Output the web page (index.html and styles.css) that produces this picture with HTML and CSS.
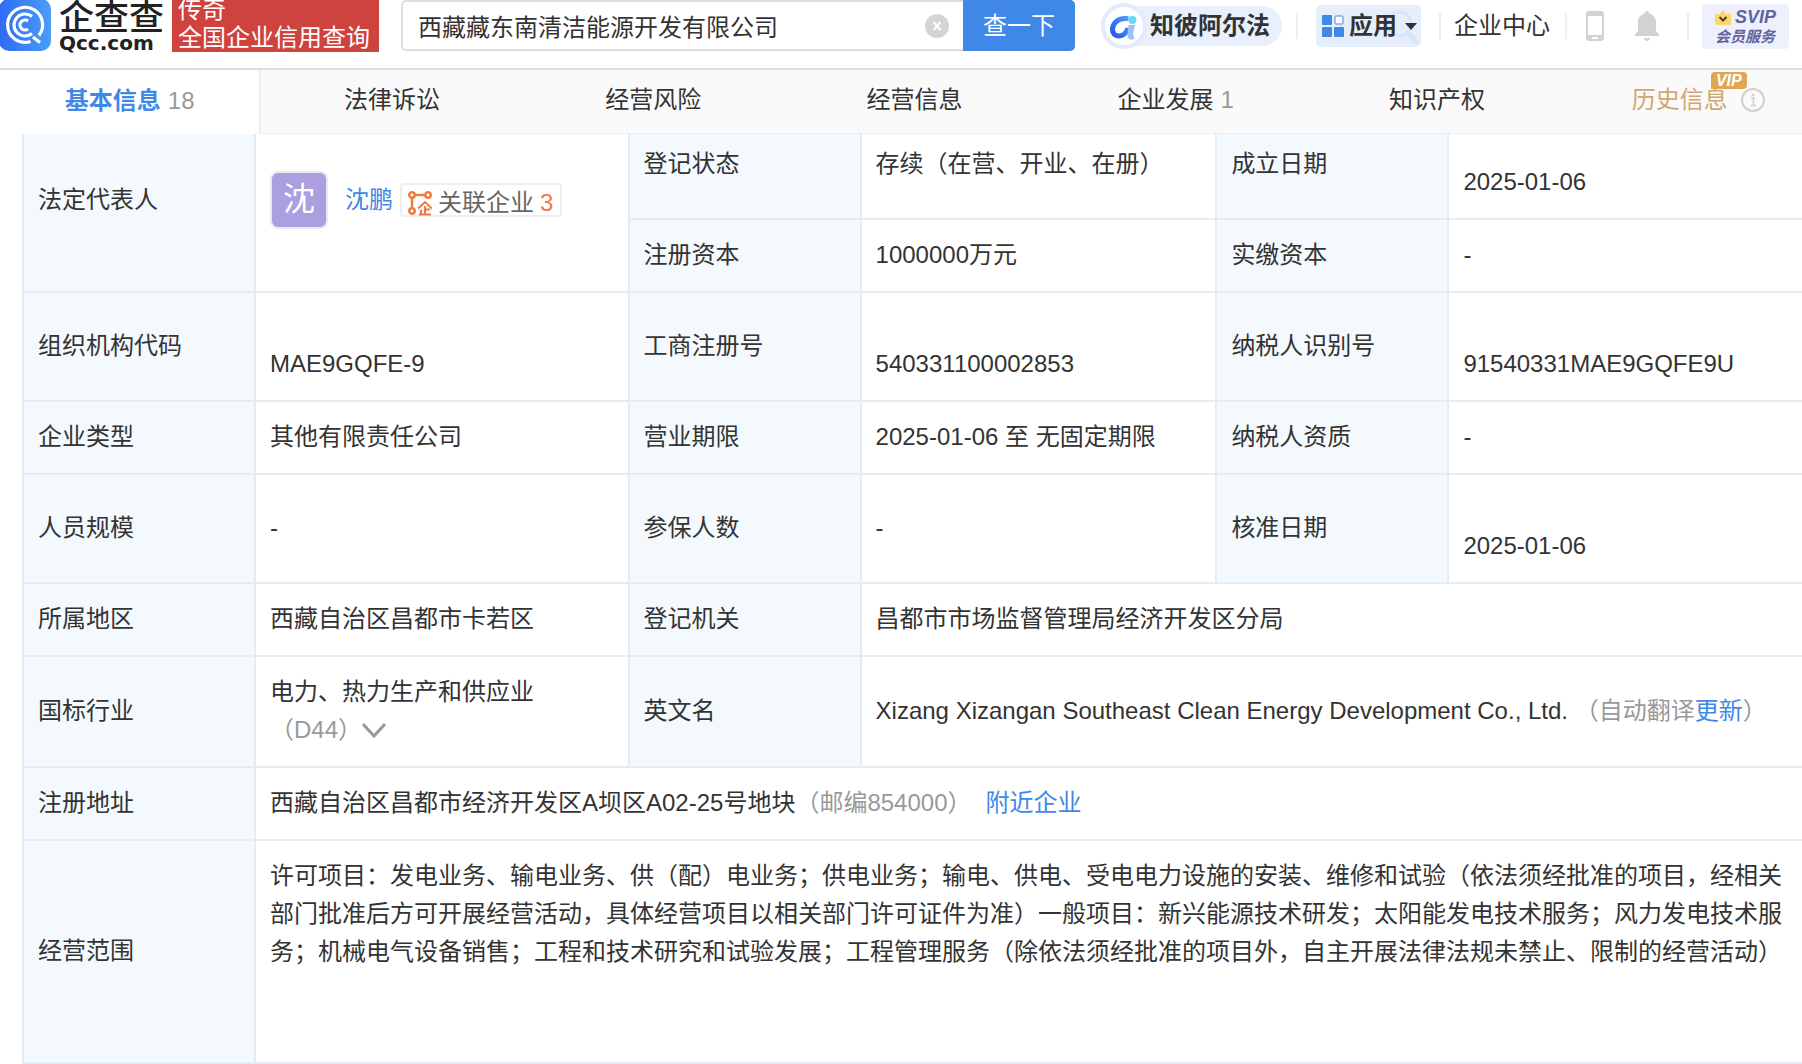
FILE: index.html
```html
<!DOCTYPE html>
<html lang="zh-CN">
<head>
    <meta charset="UTF-8">
    <meta name="viewport" content="width=device-width, initial-scale=1.0">
    <title>西藏藏东南清洁能源开发有限公司 - 企查查</title>
    <link rel="stylesheet" href="styles.css">
</head>
<body>
    <header class="header">
        <a class="logo" href="#">
            <svg class="logo-mark" viewBox="0 0 52 52" aria-hidden="true">
                <defs>
                    <linearGradient id="logo-bg" x1="0" y1="0" x2="1" y2="0">
                        <stop offset="0" stop-color="#2f6bf6"/>
                        <stop offset="1" stop-color="#4a9df7"/>
                    </linearGradient>
                </defs>
                <rect x="-1" y="-1" width="52" height="52" rx="10" fill="url(#logo-bg)"/>
                <g fill="none" stroke="#fff" stroke-width="3.200">
                    <path d="M39 35.500 A17.500 17.500 0 1 0 30.500 41.500"/>
                    <path d="M33 37 L40 42.500"/>
                    <path d="M32 16.500 A11 11 0 1 0 32 33.500"/>
                    <path d="M28 21 A5 5 0 1 0 28 29"/>
                </g>
            </svg>
            <span class="logo-text">
                <span class="logo-cn">企查查</span>
                <span class="logo-en">Qcc.com</span>
            </span>
        </a>
        <div class="slogan">传奇<br>全国企业信用查询</div>

        <form class="search">
            <input class="search-input" type="text" aria-label="企业名称" value="西藏藏东南清洁能源开发有限公司">
            <button class="search-clear" type="reset" aria-label="清空">
                <svg viewBox="0 0 24 24"><circle cx="12" cy="12" r="12" fill="#d4d4d4"/><path d="M8.500 8 L15.500 16 M15.500 8 L8.500 16" stroke="#fff" stroke-width="2"/></svg>
            </button>
            <button class="search-btn" type="button">查一下</button>
        </form>

        <nav class="tools">
            <a class="alpha" href="#">
                <svg class="alpha-icon" viewBox="0 0 46 46" aria-hidden="true">
                    <defs>
                        <linearGradient id="alpha-c" x1="1" y1="0" x2="0" y2="1">
                            <stop offset="0" stop-color="#4c9bf5"/>
                            <stop offset="1" stop-color="#2358ee"/>
                        </linearGradient>
                    </defs>
                    <circle cx="23" cy="23" r="21" fill="#fff" stroke="#e3ebfc" stroke-width="4"/>
                    <path d="M27.500 15.500 H24 C16 15.500 11.500 21 11.500 26.500 C11.500 30.500 14 33 18 33 C23 33 25.500 29.500 27 25" fill="none" stroke="url(#alpha-c)" stroke-width="5"/>
                    <path d="M27.500 22 H34 L32 31 L33.500 36 C29 38 26 35.500 26.500 31 Z" fill="#9cc0f8"/>
                    <circle cx="31.500" cy="17" r="4" fill="#62dcf8"/>
                </svg>
                <span>知彼阿尔法</span>
            </a>
            <span class="line"></span>
            <button class="apps" type="button">
                <svg class="apps-lens" viewBox="0 0 34 34" aria-hidden="true"><circle cx="14" cy="14" r="12" fill="none" stroke="#d9e6fa" stroke-width="3"/><path d="M23 23 L31 31" stroke="#d9e6fa" stroke-width="5" stroke-linecap="round"/></svg>
                <svg class="apps-icon" viewBox="0 0 22 22" aria-hidden="true">
                    <rect width="10" height="10" rx="1" fill="#3f88e8"/>
                    <rect x="13" y="1" width="8" height="8" rx="1" fill="#fff" stroke="#3f88e8"/>
                    <rect y="12" width="10" height="10" rx="1" fill="#3f88e8"/>
                    <rect x="12" y="12" width="10" height="10" rx="1" fill="#3f88e8"/>
                </svg>
                <span>应用</span>
                <svg class="apps-caret" viewBox="0 0 12 7" aria-hidden="true"><path d="M0 0H12L6 7Z" fill="#333"/></svg>
            </button>
            <span class="line"></span>
            <a class="center-link" href="#">企业中心</a>
            <span class="line"></span>
            <a class="tool-icon" href="#" aria-label="手机版">
                <svg class="phone" viewBox="0 0 18 30"><path fill-rule="evenodd" fill="#d2d2d2" d="M3 0H15A3 3 0 0 1 18 3V27A3 3 0 0 1 15 30H3A3 3 0 0 1 0 27V3A3 3 0 0 1 3 0ZM2 5V24H16V5ZM6 26V28H12V26Z"/></svg>
            </a>
            <a class="tool-icon" href="#" aria-label="消息">
                <svg class="bell" viewBox="0 0 24 30"><path fill="#d2d2d2" d="M12 0C13.300 0 14 .8 14 2.200C18.500 3.200 21 7 21 11V20L24 23.500V25H0V23.500L3 20V11C3 7 5.500 3.200 10 2.200C10 .8 10.700 0 12 0ZM9 27H15C15 28.800 13.500 30 12 30S9 28.800 9 27Z"/></svg>
            </a>
            <span class="line"></span>
            <a class="svip" href="#">
                <span class="svip-top">
                    <svg class="crown" viewBox="0 0 16 15" aria-hidden="true"><path d="M0 3L4 4.500L8 0L12 4.500L16 3V13Q16 15 14 15H2Q0 15 0 13Z" fill="#fbd56d"/><path d="M4.500 7L8 10.500L11.500 7" fill="none" stroke="#4a4030" stroke-width="2"/></svg>
                    SVIP
                </span>
                <span class="svip-sub">会员服务</span>
            </a>
        </nav>
    </header>

    <nav class="tabs">
        <a class="tab active" href="#">基本信息<span class="count">18</span></a>
        <a class="tab" href="#">法律诉讼</a>
        <a class="tab" href="#">经营风险</a>
        <a class="tab" href="#">经营信息</a>
        <a class="tab" href="#">企业发展<span class="count">1</span></a>
        <a class="tab" href="#">知识产权</a>
        <a class="tab history" href="#">
            <span class="history-text">历史信息<span class="vip">VIP</span></span>
            <svg class="info" viewBox="0 0 24 24" aria-hidden="true"><circle cx="12" cy="12" r="11" fill="none" stroke="#d0d0d0" stroke-width="2"/><path d="M10 10H12.500V17M10 17.500H15" fill="none" stroke="#d0d0d0" stroke-width="1.500"/><circle cx="12" cy="7" r="1.300" fill="#d0d0d0"/></svg>
        </a>
    </nav>

    <main class="content">
        <table class="info-table">
            <colgroup>
                <col class="col-label"><col class="col-first">
                <col class="col-label"><col class="col-second">
                <col class="col-label"><col>
            </colgroup>
            <tr class="tall">
                <th rowspan="2">法定代表人</th>
                <td rowspan="2">
                    <div class="person">
                        <span class="avatar">沈</span>
                        <a class="person-name" href="#">沈鹏</a>
                        <a class="related" href="#">
                            <svg class="related-icon" viewBox="0 0 24 26" aria-hidden="true">
                                <g fill="none" stroke="#f07a41" stroke-width="2">
                                    <g stroke-width="2.500"><circle cx="4" cy="5" r="2.700"/><circle cx="20" cy="5" r="2.700"/><circle cx="4" cy="21" r="2.700"/><path d="M7 5H17M4 8V18"/></g>
                                    <path d="M10 18.500L17 12L24 18.500M17 16V24M17 19.500H22M13 19.500V24M11 24.500H23"/>
                                </g>
                            </svg>
                            <span>关联企业</span>
                            <span class="related-num">3</span>
                        </a>
                    </div>
                </td>
                <th>登记状态</th>
                <td>存续（在营、开业、在册）</td>
                <th>成立日期</th>
                <td><span class="copy-value">2025-01-06</span></td>
            </tr>
            <tr>
                <th>注册资本</th>
                <td>1000000万元</td>
                <th>实缴资本</th>
                <td>-</td>
            </tr>
            <tr class="tall">
                <th>组织机构代码</th>
                <td><span class="copy-value">MAE9GQFE-9</span></td>
                <th>工商注册号</th>
                <td><span class="copy-value">540331100002853</span></td>
                <th>纳税人识别号</th>
                <td><span class="copy-value">91540331MAE9GQFE9U</span></td>
            </tr>
            <tr>
                <th>企业类型</th>
                <td>其他有限责任公司</td>
                <th>营业期限</th>
                <td>2025-01-06 至 无固定期限</td>
                <th>纳税人资质</th>
                <td>-</td>
            </tr>
            <tr class="tall">
                <th>人员规模</th>
                <td>-</td>
                <th>参保人数</th>
                <td>-</td>
                <th>核准日期</th>
                <td><span class="copy-value">2025-01-06</span></td>
            </tr>
            <tr>
                <th>所属地区</th>
                <td>西藏自治区昌都市卡若区</td>
                <th>登记机关</th>
                <td colspan="3">昌都市市场监督管理局经济开发区分局</td>
            </tr>
            <tr class="double">
                <th>国标行业</th>
                <td>
                    电力、热力生产和供应业<br>
                    <span class="muted">（D44）</span><svg class="chevron" viewBox="0 0 24 15" aria-hidden="true"><path d="M1 1L12 13L23 1" fill="none" stroke="#999" stroke-width="3"/></svg>
                </td>
                <th>英文名</th>
                <td colspan="3">Xizang Xizangan Southeast Clean Energy Development Co., Ltd. <span class="muted">（自动翻译<a href="#">更新</a>）</span></td>
            </tr>
            <tr>
                <th>注册地址</th>
                <td colspan="5">西藏自治区昌都市经济开发区A坝区A02-25号地块<span class="muted">（邮编854000）</span><a class="nearby" href="#">附近企业</a></td>
            </tr>
            <tr class="scope">
                <th>经营范围</th>
                <td colspan="5">许可项目：发电业务、输电业务、供（配）电业务；供电业务；输电、供电、受电电力设施的安装、维修和试验（依法须经批准的项目，经相关部门批准后方可开展经营活动，具体经营项目以相关部门许可证件为准）一般项目：新兴能源技术研发；太阳能发电技术服务；风力发电技术服务；机械电气设备销售；工程和技术研究和试验发展；工程管理服务（除依法须经批准的项目外，自主开展法律法规未禁止、限制的经营活动）</td>
            </tr>
        </table>
    </main>
</body>
</html>
```

FILE: styles.css
```css
* {
    box-sizing: border-box;
}
body {
    margin: 0;
    font-family: "Liberation Sans", "Noto Sans CJK SC", sans-serif;
    font-size: 24px;
    line-height: 38px;
    color: #333;
    background: #fff;
    overflow-x: hidden;
}
a {
    color: #3f88e8;
    text-decoration: none;
}
button,
input {
    font: inherit;
    color: inherit;
}
svg {
    display: block;
    flex: none;
}

/* header */
.header {
    display: flex;
    align-items: flex-start;
    height: 70px;
    border-bottom: 2px solid #ddd;
    background: #fff;
}
.logo {
    display: flex;
    flex: none;
    gap: 7px;
    width: 172px;
    color: #222;
}
.logo-mark {
    width: 52px;
    height: 52px;
}
.logo-text {
    display: flex;
    flex-direction: column;
    white-space: nowrap;
}
.logo-cn {
    height: 34px;
    font-size: 35px;
    line-height: 36px;
    font-weight: 500;
}
.logo-en {
    font-family: "DejaVu Sans", sans-serif;
    font-size: 20px;
    line-height: 18px;
    font-weight: bold;
}
.slogan {
    flex: none;
    width: 207px;
    height: 52px;
    padding: 0 6px;
    display: flex;
    align-items: flex-end;
    line-height: 28px;
    white-space: nowrap;
    color: #fff;
    background: #ce433d;
}
.search {
    display: flex;
    flex: 1;
    align-items: center;
    height: 51px;
    margin: 0 26px 0 22px;
    border: 2px solid #ddd;
    border-right: 0;
    border-radius: 5px;
}
.search-input {
    flex: 1;
    min-width: 0;
    height: 46px;
    padding: 0 15px;
    border: 0;
    outline: 0;
    background: none;
}
.search-clear {
    width: 24px;
    margin-right: 14px;
    padding: 0;
    border: 0;
    background: none;
}
.search-btn {
    width: 112px;
    height: 51px;
    padding: 0;
    border: 0;
    border-radius: 0 5px 5px 0;
    color: #fff;
    background: #3f88e8;
}

/* right side of the header */
.tools {
    display: flex;
    flex: none;
    align-items: center;
    height: 52px;
    padding-right: 13px;
    white-space: nowrap;
}
.line {
    width: 2px;
    height: 26px;
    background: #eee;
}
.alpha {
    display: flex;
    align-items: center;
    gap: 3px;
    height: 40px;
    margin-right: 14px;
    padding-right: 12px;
    border-radius: 20px;
    font-weight: bold;
    color: #333;
    background: #e8effd;
}
.alpha-icon {
    width: 46px;
    height: 46px;
}
.apps {
    position: relative;
    display: flex;
    align-items: center;
    gap: 5px;
    width: 105px;
    height: 42px;
    margin: 0 18px;
    padding: 0 6px;
    border: 0;
    border-radius: 5px;
    font-weight: bold;
    background: #e6eefc;
}
.apps-icon {
    width: 22px;
    height: 22px;
}
.apps span,
.apps-caret {
    z-index: 1;
}
.apps-caret {
    width: 12px;
    height: 7px;
    margin-left: 3px;
}
.apps-lens {
    position: absolute;
    right: 2px;
    top: 5px;
    width: 34px;
    height: 34px;
}
.center-link {
    margin: 0 15px 0 13px;
    color: #333;
}
.tool-icon {
    margin-left: 19px;
}
.phone {
    width: 18px;
    height: 30px;
}
.bell {
    width: 24px;
    height: 30px;
    margin: 0 28px 0 12px;
}
.svip {
    width: 87px;
    height: 45px;
    margin-left: 13px;
    padding: 4px 0 0 13px;
    border-radius: 4px;
    font-size: 15px;
    line-height: 19px;
    font-weight: bold;
    font-style: italic;
    color: #62639f;
    background: #eef1fd;
}
.svip-top {
    display: flex;
    align-items: center;
    gap: 4px;
    font-size: 18px;
}
.svip-sub {
    display: block;
}
.crown {
    width: 16px;
    height: 15px;
}

/* tabs, stay above the table which is scrolled under them */
.tabs {
    position: relative;
    z-index: 2;
    display: flex;
    height: 64px;
    background: #fff;
}
.tab {
    display: flex;
    flex: 0 0 14.5%;
    align-items: center;
    justify-content: center;
    padding-bottom: 3px;
    border-bottom: 1px solid #eee;
    color: #333;
    background: #fafafa;
}
.tab.active {
    border-right: 2px solid #eee;
    border-bottom: 0;
    font-weight: bold;
    color: #3f88e8;
    background: #fff;
}
.count {
    margin-left: 7px;
    font-weight: normal;
    color: #999;
}
.tab.history {
    gap: 13px;
    color: #d0a774;
}
.history-text {
    position: relative;
}
.vip {
    position: absolute;
    right: -19px;
    top: -9px;
    width: 36px;
    border-radius: 4px 4px 4px 0;
    font-size: 16px;
    line-height: 17px;
    font-weight: bold;
    font-style: italic;
    text-align: center;
    color: #fff;
    background: #dfa653;
}
.info {
    width: 24px;
    height: 24px;
}

/* company info */
.content {
    margin-top: -25px;
    padding-left: 22px;
}
.info-table {
    width: 100%;
    table-layout: fixed;
    border-collapse: collapse;
}
.col-label {
    width: 232px;
}
.col-first {
    width: 21%;
}
.col-second {
    width: 20%;
}
.info-table th,
.info-table td {
    height: 73px;
    padding: 0 15px 2px 14px;
    border: 2px solid #e4edf5;
    font-weight: normal;
    text-align: left;
}
.info-table td:last-child {
    border-right: 0;
}
.info-table th {
    background: #f3f9fd;
}
.info-table .tall th,
.info-table .tall td {
    height: 109px;
}
.info-table .double td {
    height: 111px;
}
.info-table .scope td {
    height: 223px;
    padding-top: 16px;
    vertical-align: top;
}
.copy-value {
    display: block;
    padding-top: 36px;
}
.muted {
    color: #999;
}
.nearby {
    margin-left: 14px;
}
.chevron {
    display: inline-block;
    width: 24px;
    height: 15px;
}
.person {
    display: flex;
    align-items: center;
}
.avatar {
    width: 58px;
    height: 58px;
    border: 2px solid #eae8f0;
    border-radius: 8px;
    font-size: 32px;
    line-height: 52px;
    text-align: center;
    color: #fff;
    background: #ab9fdf;
}
.person-name {
    margin: 0 7px 0 17px;
}
.related {
    display: flex;
    align-items: center;
    gap: 6px;
    height: 34px;
    padding: 6px 7px 0 6px;
    border: 2px solid #eee;
    border-radius: 4px;
    color: #666;
}
.related-icon {
    width: 24px;
    height: 26px;
}
.related-num {
    color: #f07a41;
}
```
